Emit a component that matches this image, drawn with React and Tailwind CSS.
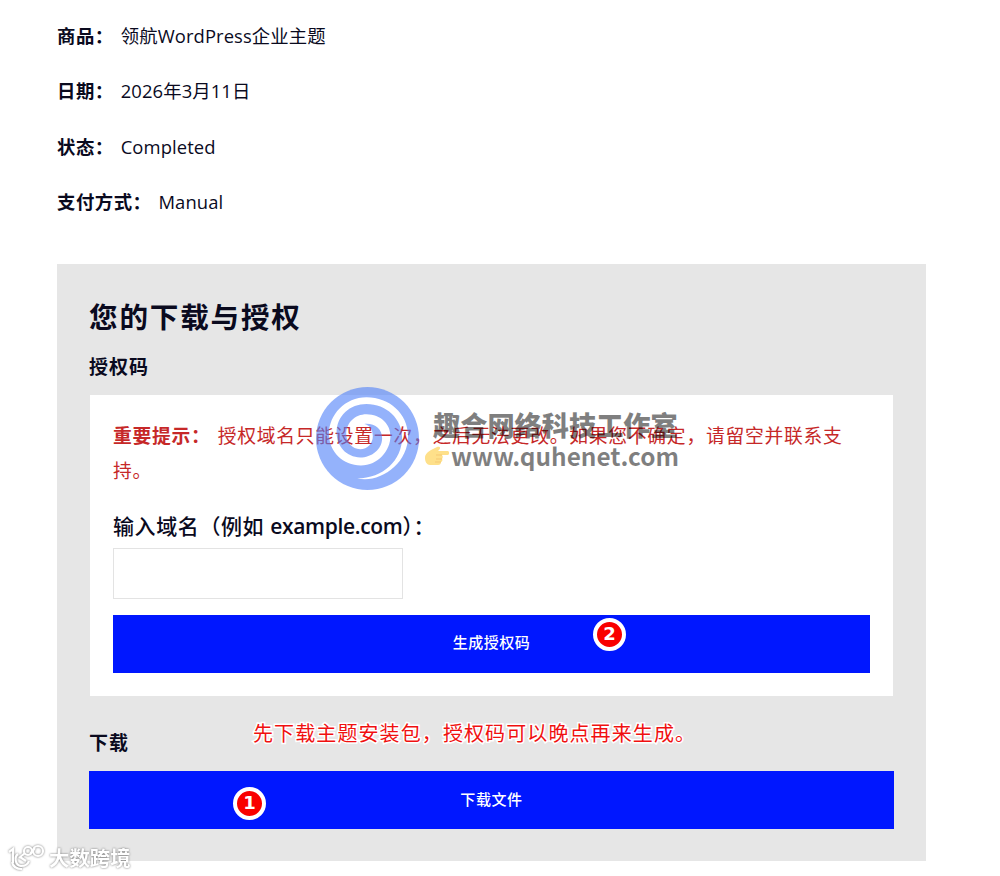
const details = [
  { label: "商品：", value: "领航WordPress企业主题" },
  { label: "日期：", value: "2026年3月11日" },
  { label: "状态：", value: "Completed" },
  { label: "支付方式：", value: "Manual" },
];

function StepBadge({ number, className }) {
  return (
    <span
      className={`absolute flex size-[33px] items-center justify-center rounded-full border-4 border-white bg-[#f90000] font-['DejaVu_Sans',sans-serif] text-[18px] leading-none font-bold tracking-normal text-white ${className}`}
    >
      {number}
    </span>
  );
}

function StudioMark() {
  return (
    <div className="pointer-events-none absolute top-[387px] left-[316px] flex gap-[6px]">
      <svg viewBox="13 14 310 310" className="size-[103px] shrink-0">
        <mask id="swirl">
          <rect x="0" y="0" width="340" height="340" fill="#fff" />
          <path
            d="M137 289 C200 305 292 250 290 158 C288 95 235 45 165 45 C100 45 52 98 52 155 C52 210 95 250 148 250 C200 250 237 205 237 162 C237 125 208 97 165 96 C130 96 104 122 104 155 C104 182 122 201 146 201 C168 201 184 184 184 162 C184 142 175 128 158 125 C190 122 212 140 212 168 C212 202 180 226 146 226 C105 226 75 192 75 152 C75 100 115 65 165 65 C225 65 272 110 272 165 C272 235 215 288 137 289 Z"
            fill="#000"
          />
        </mask>
        <circle cx="168" cy="169" r="155" fill="#4d7ff8" fillOpacity="0.6" mask="url(#swirl)" />
      </svg>
      <div className="flex flex-col pt-[21px] font-['Noto_Sans_CJK_SC',sans-serif] font-bold whitespace-nowrap text-black/50">
        <span className="pl-2 text-[27.2px] leading-8 font-black">趣合网络科技工作室</span>
        <span className="flex items-center gap-[2px] text-[24.4px] leading-8">
          <svg viewBox="0 0 24 22" className="h-[22px] w-6">
            <path
              d="M0 13C0 9 3 7 6 5L12 2c3-1 4 1 2 3l-1 1h9c3 0 3 4 0 4h-5c1 1 1 3 0 4 1 1 0 3-1 3 0 2-1 3-3 3H5c-3 0-5-3-5-7z"
              fill="#fee08a"
            />
            <path d="M11 10h6M11 14h6M10 17h6" stroke="#f5c873" fill="none" />
          </svg>
          <span>www.quhenet.com</span>
        </span>
      </div>
    </div>
  );
}

function CornerMark() {
  return (
    <div className="pointer-events-none absolute top-[840px] left-[8px] flex items-center gap-[3px] text-white drop-shadow-[0_0_1px_#777]">
      <svg viewBox="0 0 38 28" className="h-7 w-[38px]" fill="none" stroke="currentColor" strokeWidth="2.2">
        <path d="M1 9l4-3v14M10 11c-4 3-3 11 3 12 4 0 7-2 8-5M4 19c1 5 5 7 10 7M11 15l6-5M12 14l6 4" />
        <circle cx="20" cy="8" r="4" />
        <circle cx="30" cy="8" r="5" />
        <path d="M22 11l5-6" />
      </svg>
      <span className="pt-[2px] text-[20.4px] leading-8 font-bold">大数跨境</span>
    </div>
  );
}

export default function App() {
  return (
    <div className="relative flex h-[876px] w-[1000px] flex-col gap-[43.7px] overflow-hidden bg-white pt-[17.5px] pl-[57px] font-['Open_Sans','Noto_Sans_CJK_SC',sans-serif] text-[#0a0a1e]">
      <div className="flex flex-col gap-[19.6px] text-[18.4px] leading-9 tracking-[0.5px]">
        {details.map((item) => (
          <p key={item.label} className="flex gap-[7px]">
            <strong className="font-bold">{item.label}</strong>
            <span className="tracking-[0.1px]">{item.value}</span>
          </p>
        ))}
      </div>

      {/* 下载与授权 */}
      <section className="flex h-[597px] w-[869px] flex-col bg-[#e6e6e6] px-8 pt-8">
        <h2 className="text-[28.6px] leading-[42px] font-bold tracking-[1.8px]">您的下载与授权</h2>
        <h3 className="pt-[13px] text-[19px] leading-8 font-bold tracking-[1px]">授权码</h3>

        <div className="mx-px mt-[12px] flex h-[301px] flex-col bg-white px-[23px] pt-6">
          <p className="text-[18.8px] leading-[35px] tracking-[0.75px] text-[#c62828]">
            <strong className="mr-[7px] font-bold">重要提示：</strong>
            授权域名只能设置一次，之后无法更改。如果您不确定，请留空并联系支持。
          </p>
          <label htmlFor="domain" className="pt-[17px] text-[21px] leading-10 font-medium tracking-[0.6px]">
            输入域名（例如 <span className="font-semibold tracking-[-0.35px]">example.com</span>）：
          </label>
          <input id="domain" className="mt-[2px] h-[51px] w-[290px] border border-[#e3e3e3] bg-white px-4 outline-none" />
          <button className="relative mt-4 h-[58px] bg-[#0017ff] pb-[3px] text-[15px] font-medium tracking-[0.5px] text-white">
            生成授权码
            <StepBadge number="2" className="top-[3px] left-[480px]" />
          </button>
        </div>

        <div className="flex items-center gap-[124px] pt-[14px]">
          <h3 className="pt-[17px] text-[19px] leading-8 font-bold tracking-[1px]">下载</h3>
          <p className="text-[20px] leading-8 whitespace-nowrap tracking-[1.1px] text-[#f01010] [paint-order:stroke_fill] [-webkit-text-stroke:3px_white]">
            先下载主题安装包，授权码可以晚点再来生成。
          </p>
        </div>
        <button className="relative mt-[12px] h-[58px] bg-[#0017ff] pb-px text-[15px] font-medium tracking-[0.6px] text-white">
          下载文件
          <StepBadge number="1" className="top-[16px] left-[144px]" />
        </button>
      </section>

      <StudioMark />
      <CornerMark />
    </div>
  );
}
